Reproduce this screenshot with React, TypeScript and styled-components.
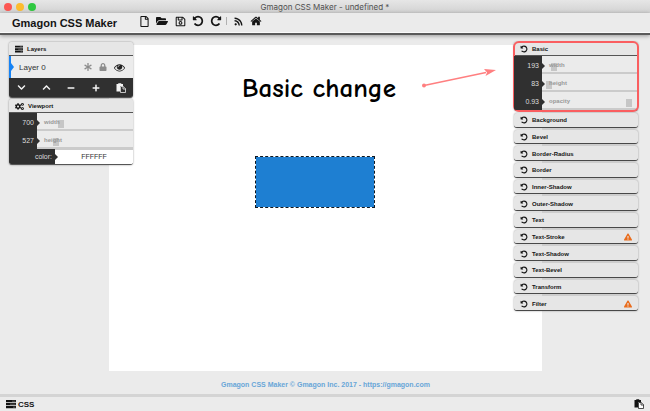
import React from "react";
import styled, { createGlobalStyle } from "styled-components";
import {
  FaAsterisk,
  FaChevronDown,
  FaChevronUp,
  FaCogs,
  FaExclamationTriangle,
  FaFolderOpen,
  FaLock,
  FaMinus,
  FaPlus,
  FaRegFile,
  FaRegSave,
  FaRss,
} from "react-icons/fa";

const ink = "#141414";
const panelDark = "#303030";
const surface = "#ebebeb";

const GlobalStyle = createGlobalStyle`
  * { box-sizing: border-box; }
  body {
    margin: 0;
    background: ${surface};
    color: ${ink};
    font-family: "Liberation Sans", Arial, sans-serif;
  }
  button, input { font: inherit; color: inherit; margin: 0; padding: 0; border: 0; background: none; }
  h1, h2, p, ul { margin: 0; padding: 0; }
  svg { display: block; flex: none; }
`;

const Window = styled.div`
  display: flex;
  flex-direction: column;
  min-height: 100vh;
`;

const TitleBar = styled.header`
  display: grid;
  grid-template-columns: 1fr auto 1fr;
  align-items: center;
  height: 13px;
  padding: 0 4px;
  background: linear-gradient(#e6e6e6, #d2d2d2);
  color: #505050;
  font: 8px/12px Inter, sans-serif;
`;

const Lights = styled.div`
  display: flex;
  gap: 4px;
`;

const Light = styled.button<{ $color: string }>`
  width: 8px;
  height: 8px;
  border-radius: 50%;
  background: ${(p) => p.$color};
`;

const Toolbar = styled.nav`
  position: relative;
  z-index: 2;
  display: flex;
  align-items: center;
  height: 22px;
  padding: 0 12px 4px;
  border-bottom: 2px solid #5a5a5a;
  box-shadow: inset 0 -1px #fafafa, 0 1px 4px rgba(0, 0, 0, 0.35);
`;

const Brand = styled.h1`
  width: 123px;
  padding-top: 4px;
  font-size: 11px;
  line-height: 14px;
  white-space: nowrap;
`;

const Tools = styled.div`
  display: flex;
  align-items: center;
`;

const Tool = styled.button`
  display: grid;
  place-items: center;
  width: 18px;
  height: 16px;
`;

const Divider = styled.span`
  width: 1px;
  height: 8px;
  margin: 0 2px 0 1px;
  background: #b0b0b0;
`;

const Workspace = styled.main`
  position: relative;
  flex: 1;
  padding: 10px 108px 0 109px;
`;

const Canvas = styled.section`
  position: relative;
  height: 326px;
  background: #fff;
`;

const CanvasTitle = styled.p`
  position: absolute;
  left: 133px;
  top: 26px;
  color: #000;
  font: 600 27px/36px "Comic Sans MS", "Comic Neue", "Open Sans", sans-serif;
  white-space: nowrap;
`;

const Shape = styled.div`
  position: absolute;
  left: 146px;
  top: 111px;
  width: 120px;
  height: 52px;
  border: 1px dashed #101820;
  background: #1e7fd2 padding-box;
`;

const Pointer = styled.svg`
  position: absolute;
  left: 311px;
  top: 20px;
`;

const Credit = styled.footer`
  padding: 9px 0 4px;
  color: #68a6d8;
  font-size: 7px;
  font-weight: bold;
  line-height: 10px;
  text-align: center;
`;

const Dock = styled.aside<{ $side: "left" | "right" }>`
  position: absolute;
  top: 7px;
  ${(p) => (p.$side === "left" ? "left: 9px;" : "right: 12px;")}
  width: 124px;
  display: flex;
  flex-direction: column;
  gap: 1px;
`;

const Panel = styled.section`
  border-radius: 3px;
  overflow: hidden;
  background: #e9e9e9;
  border-bottom: 1px solid #555;
  box-shadow: 0 0 2px rgba(0, 0, 0, 0.45);
`;

const Highlight = styled.div`
  position: relative;
  margin-bottom: 1px;
  &::after {
    content: "";
    position: absolute;
    inset: -1px;
    border: 2px solid #fa5e60;
    border-radius: 6px;
    pointer-events: none;
  }
`;

const PanelHead = styled.button`
  display: flex;
  align-items: center;
  gap: 4px;
  width: 100%;
  height: 14px;
  padding: 1px 6px 0;
  background: #e6e6e6;
  border-bottom: 1px solid #555;
  font-size: 6px;
  font-weight: bold;
  line-height: 8px;
  text-align: left;
`;

const HeadLabel = styled.span`
  flex: 1;
`;

const LayerRow = styled.div`
  position: relative;
  display: flex;
  align-items: center;
  gap: 7px;
  height: 22px;
  padding: 0 8px;
  border-left: 2px solid #1683f5;
  background: #ececec;
  color: #333;
  font-size: 8px;
  &::before {
    content: "";
    position: absolute;
    left: 0;
    top: 7px;
    border: 4px solid transparent;
    border-left: 3px solid #1683f5;
    border-right: 0;
  }
`;

const LayerName = styled.span`
  flex: 1;
`;

const IconButton = styled.button<{ $color?: string }>`
  display: grid;
  place-items: center;
  color: ${(p) => p.$color ?? "inherit"};
`;

const LayerActions = styled.div`
  display: grid;
  grid-template-columns: repeat(5, 1fr);
  height: 19px;
  background: ${panelDark};
  color: #f4f4f4;
`;

const Field = styled.label`
  display: grid;
  grid-template-columns: 28px 1fr;
  height: 18px;
`;

const Value = styled.span`
  position: relative;
  z-index: 1;
  padding-right: 3px;
  background: ${panelDark};
  color: #dedede;
  font-size: 7px;
  line-height: 19px;
  text-align: right;
  &::after {
    content: "";
    position: absolute;
    left: 100%;
    top: 7px;
    border: 3px solid transparent;
    border-left-color: ${panelDark};
    border-right: 0;
  }
`;

const Track = styled.span`
  position: relative;
  display: block;
  border-bottom: 3px solid #cbcbcb;
  background: #ebebeb;
`;

const TrackName = styled.span`
  position: absolute;
  left: 7px;
  top: 5px;
  color: #989898;
  font-size: 6px;
  font-weight: bold;
  line-height: 8px;
  pointer-events: none;
`;

const Range = styled.input`
  display: block;
  width: 100%;
  height: 15px;
  appearance: none;
  &::-webkit-slider-runnable-track {
    height: 15px;
    padding-top: 7px;
  }
  &::-webkit-slider-thumb {
    appearance: none;
    width: 6px;
    height: 8px;
    background: #c6c6c6;
  }
`;

const ColorField = styled.label`
  display: grid;
  grid-template-columns: 46px 1fr;
  height: 15px;
  background: #fff;
`;

const ColorName = styled(Value)`
  line-height: 15px;
  &::after { top: 5px; }
`;

const ColorInput = styled.input`
  width: 100%;
  color: #333;
  font-size: 7px;
  text-align: center;
`;

const SectionList = styled.ul`
  display: grid;
  grid-auto-rows: 1fr;
  gap: 2px;
  height: 198px;
  list-style: none;
`;

const SectionButton = styled(PanelHead)`
  height: 100%;
  border-radius: 3px;
  border-bottom: 1px solid #484848;
  box-shadow: 0 0 2px rgba(0, 0, 0, 0.4);
`;

const StatusBar = styled.div`
  display: flex;
  align-items: center;
  justify-content: space-between;
  height: 17px;
  padding: 0 6px;
  border-top: 3px solid #d4d4d4;
`;

const StatusButton = styled.button`
  display: flex;
  align-items: center;
  gap: 2px;
  font-size: 8px;
  font-weight: bold;
`;

const undoPath =
  "M1664 896q0 156-61 298t-164 245-245 164-298 61q-172 0-327-72.5t-264-204.5q-7-10-6.500-22.500t8.500-20.500l137-138q10-9 25-9 16 2 23 12 73 95 179 147t225 52q104 0 198.500-40.500t163.500-109.500 109.500-163.500 40.500-198.500-40.500-198.500-109.500-163.500-163.500-109.500-198.500-40.500q-98 0-188 35.500t-160 101.500l137 138q31 30 14 69-17 40-59 40h-448q-26 0-45-19t-19-45v-448q0-42 40-59 39-17 69 14l130 129q107-101 244.500-156.500t284.500-55.500q156 0 298 61t245 164 164 245 61 298z";

const TurnIcon = ({ size, forward }: { size: number; forward?: boolean }) => (
  <svg width={size} height={size} viewBox="0 0 1792 1792" fill="currentColor" aria-hidden>
    <path d={undoPath} transform={forward ? "matrix(-1 0 0 1 1792 0)" : undefined} />
  </svg>
);

const HomeIcon = () => (
  <svg width="12" height="12" viewBox="0 0 1792 1792" fill="currentColor" aria-hidden>
    <path d="M1472 992v480q0 26-19 45t-45 19h-384v-384h-256v384h-384q-26 0-45-19t-19-45v-480q0-1 .5-3t.5-3l575-474 575 474q1 2 1 6zm223-69l-62 74q-8 9-21 11h-3q-13 0-21-7l-692-577-692 577q-12 8-24 7-13-2-21-11l-62-74q-8-10-7-23.500t11-21.500l719-599q32-26 76-26t76 26l244 204v-195q0-14 9-23t23-9h192q14 0 23 9t9 23v408l219 182q10 8 11 21.500t-7 23.500z" />
  </svg>
);

const EyeIcon = () => (
  <svg width="11" height="11" viewBox="0 0 1792 1792" fill="currentColor" aria-hidden>
    <path d="M1664 960q-152-236-381-353 61 104 61 225 0 185-131.500 316.500t-316.500 131.500-316.500-131.500-131.500-316.500q0-121 61-225-229 117-381 353 133 205 333.500 326.500t434.500 121.500 434.500-121.500 333.500-326.500zm-720-384q0-20-14-34t-34-14q-125 0-214.500 89.500t-89.500 214.500q0 20 14 34t34 14 34-14 14-34q0-86 61-147t147-61q20 0 34-14t14-34zm848 384q0 34-20 69-140 230-376.500 368.500t-499.500 138.500-499.500-139-376.500-368q-20-35-20-69t20-69q140-229 376.500-368t499.500-139 499.500 139 376.500 368q20 35 20 69z" />
  </svg>
);

const ListIcon = ({ size }: { size: number }) => (
  <svg width={size} height={size} viewBox="0 0 20 20" aria-hidden>
    <path fill="#111" d="M0 2h20v4.500H0zM0 8h20v4.500H0zM0 14h20v4.500H0z" />
    <path fill="#777" d="M12 3.500h7v1.500h-7zM8 9.500h11v1.500H8zM14 15.500h5v1.500h-5z" />
  </svg>
);

const PasteIcon = ({ size, page }: { size: number; page: string }) => (
  <svg width={size} height={size} viewBox="0 0 20 20" aria-hidden>
    <path fill="currentColor" d="M1 2h3.500V.5h6V2H14v4H8v11H1z" />
    <path fill={page} stroke="currentColor" strokeWidth="1.500" d="M9 7h5.500L19 11.500V19H9z" />
    <path fill="none" stroke="currentColor" strokeWidth="1.500" d="M14 7v5h5" />
  </svg>
);

type SliderProps = { name: string; value: number; max: number; step?: number };

const Slider = ({ name, value, max, step = 1 }: SliderProps) => {
  const [current, setCurrent] = React.useState(value);
  return (
    <Field>
      <Value>{current}</Value>
      <Track>
        <Range
          type="range"
          min={0}
          max={max}
          step={step}
          value={current}
          onChange={(e) => setCurrent(Number(e.target.value))}
        />
        <TrackName>{name}</TrackName>
      </Track>
    </Field>
  );
};

const sections: { name: string; warn?: boolean }[] = [
  { name: "Background" },
  { name: "Bevel" },
  { name: "Border-Radius" },
  { name: "Border" },
  { name: "Inner-Shadow" },
  { name: "Outer-Shadow" },
  { name: "Text" },
  { name: "Text-Stroke", warn: true },
  { name: "Text-Shadow" },
  { name: "Text-Bevel" },
  { name: "Transform" },
  { name: "Filter", warn: true },
];

export default function App() {
  return (
    <Window>
      <GlobalStyle />
      <TitleBar>
        <Lights>
          <Light $color="#fc5753" aria-label="Close" />
          <Light $color="#fdbc2e" aria-label="Minimize" />
          <Light $color="#2fc840" aria-label="Zoom" />
        </Lights>
        <span>Gmagon CSS Maker - undefined *</span>
      </TitleBar>
      <Toolbar>
        <Brand>Gmagon CSS Maker</Brand>
        <Tools>
          <Tool aria-label="New"><FaRegFile size={11} /></Tool>
          <Tool aria-label="Open"><FaFolderOpen size={12} /></Tool>
          <Tool aria-label="Save"><FaRegSave size={11} /></Tool>
          <Tool aria-label="Undo"><TurnIcon size={12} /></Tool>
          <Tool aria-label="Redo"><TurnIcon size={12} forward /></Tool>
          <Divider />
          <Tool aria-label="News"><FaRss size={9} /></Tool>
          <Tool aria-label="Home"><HomeIcon /></Tool>
        </Tools>
      </Toolbar>

      <Workspace>
        <Canvas>
          <CanvasTitle>Basic change</CanvasTitle>
          <Pointer width="80" height="26" viewBox="0 0 80 26" aria-hidden>
            <circle cx="4" cy="20.500" r="2" fill="#ff7f80" />
            <path d="M4 20.500 66 7.500" stroke="#ff7f80" strokeWidth="1.500" />
            <path d="M76 5 64 4 67 7.500 65.500 11z" fill="#ff7f80" />
          </Pointer>
          <Shape />
        </Canvas>
        <Credit>Gmagon CSS Maker © Gmagon Inc. 2017 - https://gmagon.com</Credit>

        <Dock $side="left">
          <Panel>
            <PanelHead><ListIcon size={8} /><HeadLabel>Layers</HeadLabel></PanelHead>
            <LayerRow>
              <LayerName>Layer 0</LayerName>
              <IconButton $color="#8c8c8c" aria-label="Effects"><FaAsterisk size={8} /></IconButton>
              <IconButton $color="#8c8c8c" aria-label="Lock"><FaLock size={8} /></IconButton>
              <IconButton $color="#222" aria-label="Visible"><EyeIcon /></IconButton>
            </LayerRow>
            <LayerActions>
              <IconButton aria-label="Move down"><FaChevronDown size={9} /></IconButton>
              <IconButton aria-label="Move up"><FaChevronUp size={9} /></IconButton>
              <IconButton aria-label="Remove"><FaMinus size={8} /></IconButton>
              <IconButton aria-label="Add"><FaPlus size={8} /></IconButton>
              <IconButton aria-label="Paste"><PasteIcon size={10} page={panelDark} /></IconButton>
            </LayerActions>
          </Panel>
          <Panel>
            <PanelHead><FaCogs size={9} /><HeadLabel>Viewport</HeadLabel></PanelHead>
            <Slider name="width" value={700} max={3000} />
            <Slider name="height" value={527} max={3000} />
            <ColorField>
              <ColorName>color:</ColorName>
              <ColorInput defaultValue="FFFFFF" />
            </ColorField>
          </Panel>
        </Dock>

        <Dock $side="right">
          <Highlight>
            <Panel>
              <PanelHead><TurnIcon size={8} /><HeadLabel>Basic</HeadLabel></PanelHead>
              <Slider name="width" value={193} max={2000} />
              <Slider name="height" value={83} max={2000} />
              <Slider name="opacity" value={0.93} max={1} step={0.01} />
            </Panel>
          </Highlight>
          <SectionList>
            {sections.map((s) => (
              <li key={s.name}>
                <SectionButton>
                  <TurnIcon size={8} />
                  <HeadLabel>{s.name}</HeadLabel>
                  {s.warn && <FaExclamationTriangle size={8} color="#ea6c1c" />}
                </SectionButton>
              </li>
            ))}
          </SectionList>
        </Dock>
      </Workspace>

      <StatusBar>
        <StatusButton><ListIcon size={10} />CSS</StatusButton>
        <StatusButton aria-label="Copy CSS"><PasteIcon size={10} page="#fff" /></StatusButton>
      </StatusBar>
    </Window>
  );
}
